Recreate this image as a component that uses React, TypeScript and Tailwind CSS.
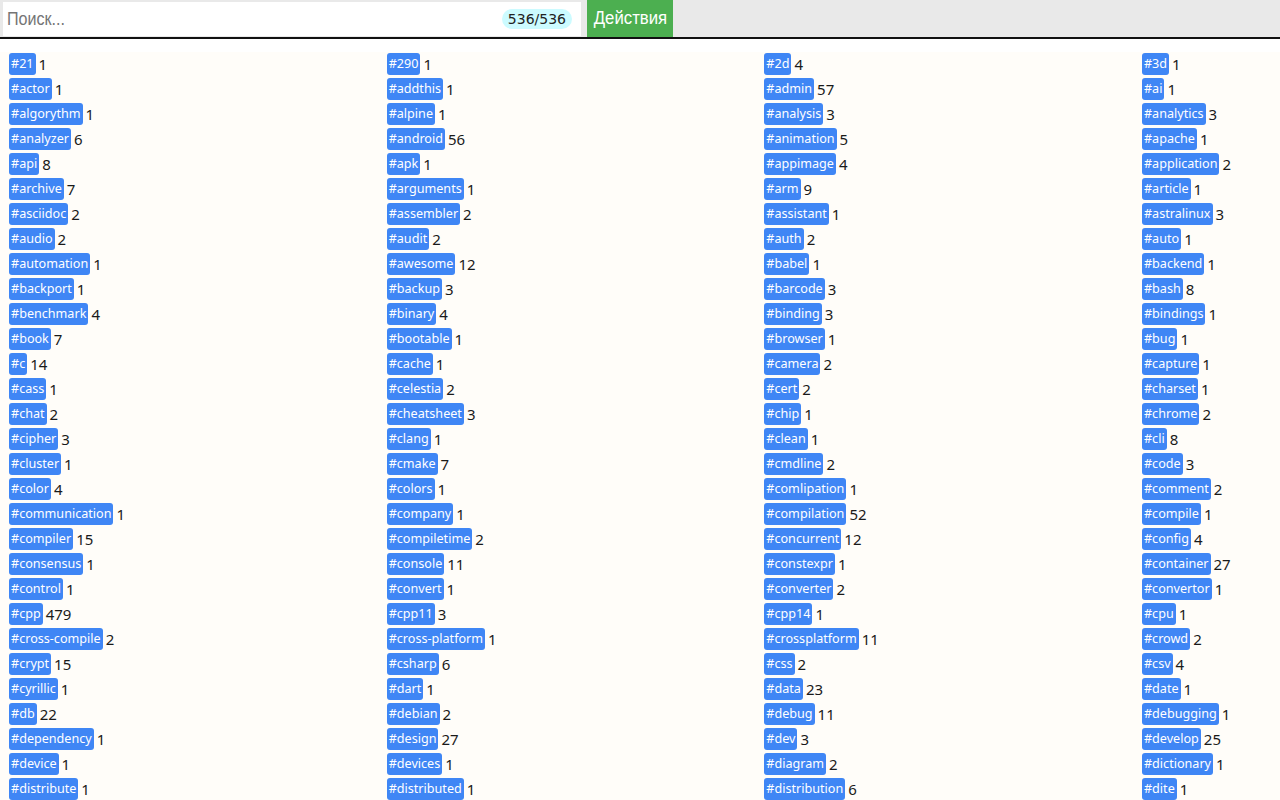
import React from "react";

const raw: string[] = [
  "21 1|290 1|2d 4|3d 1",
  "actor 1|addthis 1|admin 57|ai 1",
  "algorythm 1|alpine 1|analysis 3|analytics 3",
  "analyzer 6|android 56|animation 5|apache 1",
  "api 8|apk 1|appimage 4|application 2",
  "archive 7|arguments 1|arm 9|article 1",
  "asciidoc 2|assembler 2|assistant 1|astralinux 3",
  "audio 2|audit 2|auth 2|auto 1",
  "automation 1|awesome 12|babel 1|backend 1",
  "backport 1|backup 3|barcode 3|bash 8",
  "benchmark 4|binary 4|binding 3|bindings 1",
  "book 7|bootable 1|browser 1|bug 1",
  "c 14|cache 1|camera 2|capture 1",
  "cass 1|celestia 2|cert 2|charset 1",
  "chat 2|cheatsheet 3|chip 1|chrome 2",
  "cipher 3|clang 1|clean 1|cli 8",
  "cluster 1|cmake 7|cmdline 2|code 3",
  "color 4|colors 1|comlipation 1|comment 2",
  "communication 1|company 1|compilation 52|compile 1",
  "compiler 15|compiletime 2|concurrent 12|config 4",
  "consensus 1|console 11|constexpr 1|container 27",
  "control 1|convert 1|converter 2|convertor 1",
  "cpp 479|cpp11 3|cpp14 1|cpu 1",
  "cross-compile 2|cross-platform 1|crossplatform 11|crowd 2",
  "crypt 15|csharp 6|css 2|csv 4",
  "cyrillic 1|dart 1|data 23|date 1",
  "db 22|debian 2|debug 11|debugging 1",
  "dependency 1|design 27|dev 3|develop 25",
  "device 1|devices 1|diagram 2|dictionary 1",
  "distribute 1|distributed 1|distribution 6|dite 1",
];

const items = raw.flatMap((row) =>
  row.split("|").map((cell) => {
    const [tag, count] = cell.split(" ");
    return { tag, count };
  })
);

export default function App() {
  return (
    <div className="h-screen overflow-hidden bg-white font-['Noto_Sans',sans-serif]">
      <div className="flex h-[39px] items-start border-b-2 border-[#111] bg-[#e9e9e9]">
        <div className="ml-[3px] mt-[2px] flex h-[34px] w-[578px] items-center justify-between bg-white pl-[4px] pr-[9px]">
          <span className="origin-left scale-x-[0.87] font-['Liberation_Sans',Arial,sans-serif] text-[18.5px] text-[#757575]">
            Поиск...
          </span>
          <span className="rounded-full bg-[#ccfbff] px-[6px] font-['DejaVu_Sans',sans-serif] text-[14px] leading-[20px] text-[#222]">
            536/536
          </span>
        </div>
        <div className="ml-[6px] flex h-[37px] w-[86px] items-center justify-center bg-[#4caf50]">
          <span className="scale-x-[0.93] font-['Liberation_Sans',Arial,sans-serif] text-[18px] text-white">
            Действия
          </span>
        </div>
      </div>
      <div className="mt-[13px] bg-[#fffdf9] pl-[9px] pt-px">
        <div className="grid grid-cols-[repeat(4,377.67px)] gap-y-[3px]">
          {items.map((it) => (
            <div key={it.tag} className="flex h-[22px] items-center whitespace-nowrap">
              <span className="flex h-[22px] items-center rounded-[3px] bg-[#3f86f5] px-[2px] text-[12.6px] text-white">
                #{it.tag}
              </span>
              <span className="ml-[3px] text-[15px] text-[#1a1a1a]">{it.count}</span>
            </div>
          ))}
        </div>
      </div>
    </div>
  );
}
